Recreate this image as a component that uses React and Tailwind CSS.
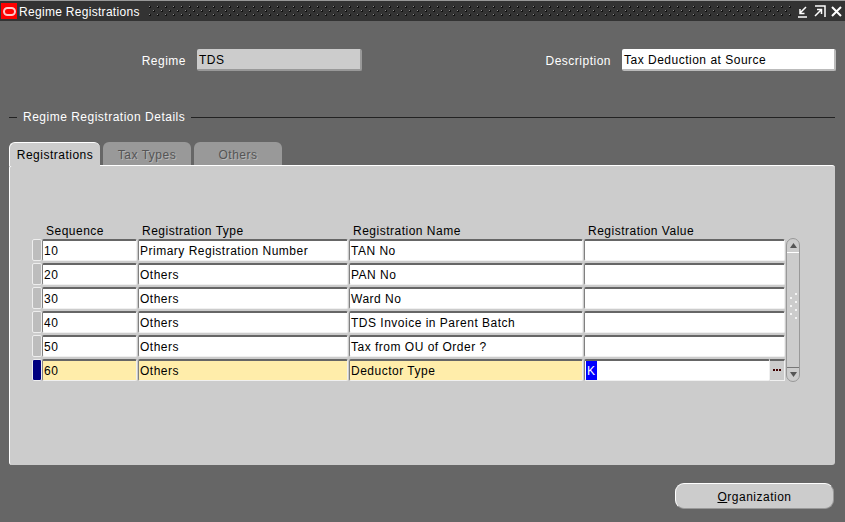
import React from 'react';

const rows = [
  ['10', 'Primary Registration Number', 'TAN No'],
  ['20', 'Others', 'PAN No'],
  ['30', 'Others', 'Ward No'],
  ['40', 'Others', 'TDS Invoice in Parent Batch'],
  ['50', 'Others', 'Tax from OU of Order ?'],
  ['60', 'Others', 'Deductor Type'],
];

const Cell = ({ text, active, className = '' }) => (
  <div
    className={`h-[22px] rounded-[2px] border-t-2 border-l border-r border-b border-t-[#666666] border-l-[#808080] border-r-[#f0f0f0] border-b-[#f0f0f0] pl-[1px] leading-[21px] whitespace-nowrap overflow-hidden text-black ${active ? 'bg-[#ffedaa]' : 'bg-white'} ${className}`}
  >
    {text}
  </div>
);

// dotted grip in the title bar
const TitleGrip = () => (
  <svg className="flex-1 h-[11px] min-w-0" aria-hidden="true">
    <defs>
      <pattern id="grip" width="8" height="8" patternUnits="userSpaceOnUse">
        <rect x="1" y="0" width="1" height="1" fill="#8a8a8a" />
        <rect x="2" y="0" width="1" height="2" fill="#111111" />
        <rect x="1" y="1" width="1" height="1" fill="#111111" />
        <rect x="5" y="4" width="1" height="1" fill="#8a8a8a" />
        <rect x="6" y="4" width="1" height="2" fill="#111111" />
        <rect x="5" y="5" width="1" height="1" fill="#111111" />
      </pattern>
    </defs>
    <rect width="100%" height="100%" fill="url(#grip)" />
  </svg>
);

const Scrollbar = () => (
  <div className="w-[14px] h-[144px] ml-[1px] -mt-[1px] flex flex-col rounded-[7px] border border-[#999999] bg-[#cccccc]">
    <div className="h-[14px] shrink-0 border-b border-b-white flex items-center justify-center">
      <svg width="7" height="5" viewBox="0 0 7 5"><path d="M3.500 0 7 5H0z" fill="#555555" /></svg>
    </div>
    <div className="flex-1 flex items-center justify-center pb-[6px]">
      <svg width="9" height="28" viewBox="0 0 9 28" fill="#f4f4f4">
        <rect x="6" y="0" width="2" height="2" /><rect x="1" y="4" width="2" height="2" />
        <rect x="6" y="8" width="2" height="2" /><rect x="1" y="12" width="2" height="2" />
        <rect x="6" y="16" width="2" height="2" /><rect x="1" y="20" width="2" height="2" />
        <rect x="6" y="24" width="2" height="2" />
      </svg>
    </div>
    <div className="h-[14px] shrink-0 border-t border-t-[#777777] flex items-center justify-center">
      <svg width="7" height="5" viewBox="0 0 7 5"><path d="M0 0h7L3.500 5z" fill="#555555" /></svg>
    </div>
  </div>
);

export default function App() {
  return (
    <div className="w-[845px] h-[522px] overflow-hidden bg-[#666666] text-[12px] tracking-[0.5px] font-['Liberation_Sans',Arial,sans-serif]">
      {/* Title bar */}
      <div className="h-[21px] bg-[#333333] border-t border-t-[#999999] flex items-center text-white tracking-[0.3px]">
        <div className="w-[16px] h-[16px] ml-[1px] bg-[#ff0000] flex items-center justify-center">
          <div className="w-[13px] h-[9px] rounded-[5px] border-2 border-[#ffc8c8]" />
        </div>
        <span className="ml-[2px] pt-[1px] w-[129px] whitespace-nowrap">Regime Registrations</span>
        <TitleGrip />
        <div className="flex items-center gap-[5px] ml-[6px] mr-[3px]">
          <svg width="12" height="13" viewBox="0 0 12 13" fill="none" stroke="#ffffff" strokeWidth="1.500">
            <path d="M1 12h9M9 2 3 8M3 4v4.500h4.500" />
          </svg>
          <svg width="12" height="13" viewBox="0 0 12 13" fill="none" stroke="#ffffff" strokeWidth="1.500">
            <path d="M1 1h10v11M1 11l6-6M3 4.500h4.500V9" />
          </svg>
          <svg width="11" height="11" viewBox="0 0 11 11" fill="none" stroke="#ffffff" strokeWidth="2">
            <path d="m1 1 9 9M10 1l-9 9" />
          </svg>
        </div>
      </div>

      {/* Header fields */}
      <div className="h-[22px] mt-[28px] flex items-center text-white">
        <span className="w-[186px] pt-[2px] text-right">Regime</span>
        <div className="w-[165px] h-[22px] ml-[11px] pl-[2px] rounded-[2px] bg-[#cccccc] border-r-2 border-b-2 border-r-[#999999] border-b-[#999999] text-black leading-[22px]">TDS</div>
        <span className="w-[249px] pt-[2px] text-right">Description</span>
        <div className="w-[214px] h-[22px] ml-[11px] pl-[2px] rounded-[2px] bg-white border-r-2 border-b-2 border-r-[#bbbbbb] border-b-[#bbbbbb] text-black leading-[22px]">Tax Deduction at Source</div>
      </div>

      {/* Group heading */}
      <div className="mt-[36px] w-[835px] h-[20px] flex items-center text-white">
        <div className="w-[8px] ml-[9px] h-px bg-[#222222]" />
        <span className="mx-[6px] whitespace-nowrap">Regime Registration Details</span>
        <div className="flex-1 h-px bg-[#222222]" />
      </div>

      {/* Tabs */}
      <div className="mt-[15px] ml-[9px] h-[23px] flex items-end gap-[3px]">
        <div className="w-[91px] h-[24px] -mb-[1px] relative rounded-t-[6px] bg-[#cccccc] border-t border-l border-t-white border-l-white flex items-center justify-center text-black">Registrations</div>
        <div className="w-[88px] h-[23px] pt-[3px] rounded-t-[6px] bg-[#999999] flex items-center justify-center text-[#555555] [text-shadow:1px_1px_0_#b5b5b5]">Tax Types</div>
        <div className="w-[88px] h-[23px] pt-[3px] rounded-t-[6px] bg-[#999999] flex items-center justify-center text-[#555555] [text-shadow:1px_1px_0_#b5b5b5]">Others</div>
      </div>

      {/* Tab panel */}
      <div className="ml-[9px] w-[826px] h-[300px] rounded-[3px] bg-[#cccccc] border-t border-l border-t-white border-l-white pl-[22px] pt-[56px]">
        <div className="h-[17px] flex items-center text-black">
          <span className="w-[110px] pl-[14px]">Sequence</span>
          <span className="w-[211px]">Registration Type</span>
          <span className="w-[235px]">Registration Name</span>
          <span>Registration Value</span>
        </div>
        <div className="flex">
          <div className="w-[753px] flex flex-col gap-[2px]">
            {rows.map((r, i) => {
              const active = i === 5;
              return (
                <div key={r[0]} className="flex">
                  <div className={`w-[10px] h-[22px] rounded-[2px] border border-[#eeeeee] ${active ? 'bg-[#000080]' : 'bg-[#bdbdbd]'}`} />
                  <Cell text={r[0]} active={active} className="w-[95px]" />
                  <Cell text={r[1]} active={active} className="w-[210px] ml-[1px]" />
                  <Cell text={r[2]} active={active} className="w-[234px] ml-[1px]" />
                  {active ? (
                    <div className="flex ml-[1px]">
                      <Cell text={<span className="bg-[#0000ff] text-white px-[1px] inline-block h-[19px]">K</span>} className="w-[186px]" />
                      <div className="w-[15px] h-[22px] border-t-2 border-t-[#666666] border-b border-b-[#f0f0f0] border-r border-r-[#f0f0f0] flex items-center justify-center">
                        <svg width="9" height="3" viewBox="0 0 9 3" fill="#400000">
                          <rect width="2" height="2" y="0" /><rect x="3" width="2" height="2" /><rect x="6" width="2" height="2" />
                        </svg>
                      </div>
                    </div>
                  ) : (
                    <Cell text="" className="w-[201px] ml-[1px]" />
                  )}
                </div>
              );
            })}
          </div>
          <Scrollbar />
        </div>
      </div>

      {/* Bottom button */}
      <div className="mt-[18px] flex justify-end pr-[11px]">
        <div className="w-[159px] h-[26px] pt-[2px] rounded-[9px] bg-[#cccccc] border-t border-l border-t-white border-l-white border-b border-r border-b-[#999999] border-r-[#999999] flex items-center justify-center text-black">
          <span><span className="underline">O</span>rganization</span>
        </div>
      </div>
    </div>
  );
}
